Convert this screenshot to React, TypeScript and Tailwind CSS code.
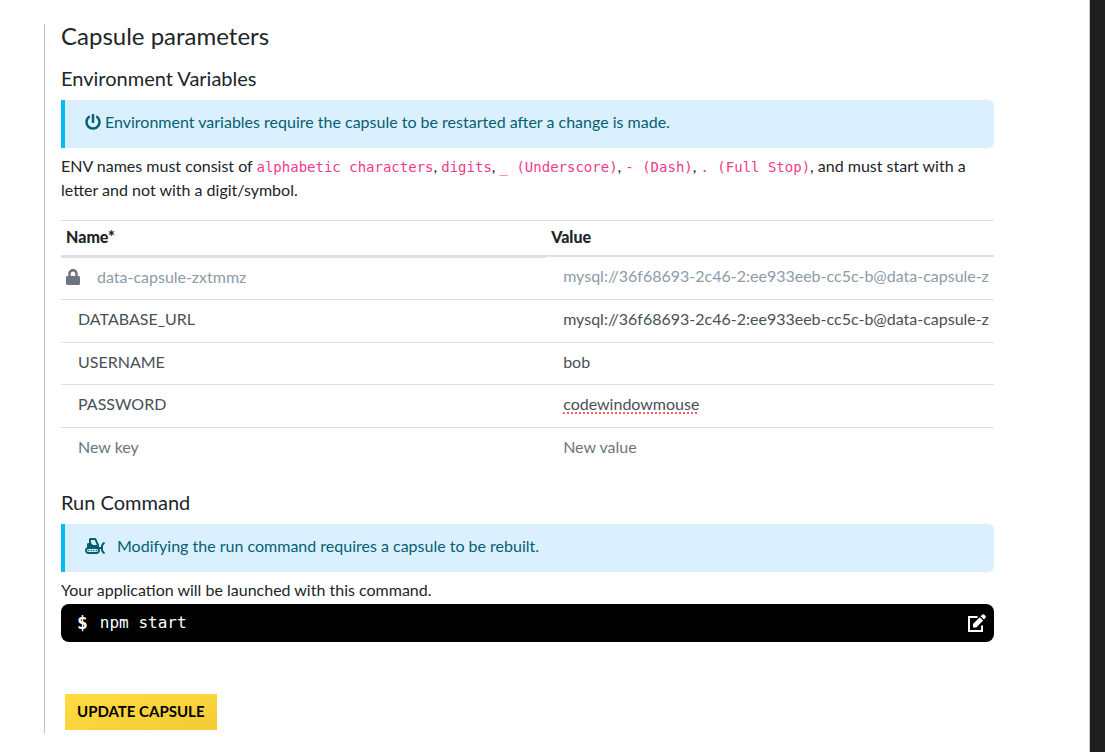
import { useState } from 'react';
import type { ReactNode } from 'react';
import { FaLock, FaPowerOff, FaSnowplow } from 'react-icons/fa';

type Variable = { name: string; value: string; locked?: boolean; misspelt?: boolean };

const variables: Variable[] = [
  {
    name: 'data-capsule-zxtmmz',
    value: 'mysql://36f68693-2c46-2:ee933eeb-cc5c-b@data-capsule-z',
    locked: true,
  },
  { name: 'DATABASE_URL', value: 'mysql://36f68693-2c46-2:ee933eeb-cc5c-b@data-capsule-z' },
  { name: 'USERNAME', value: 'bob' },
  { name: 'PASSWORD', value: 'codewindowmouse', misspelt: true },
  { name: '', value: '' },
];

function EditIcon() {
  return (
    <svg viewBox="0 0 18 18" className="size-[18px]" aria-hidden="true">
      <path d="M9.5 3H1v14h13v-5.5" fill="none" stroke="currentColor" strokeWidth="2" />
      <path d="M5 13.5V10l6.8-6.8 3.3 3.3-6.8 7z" fill="currentColor" />
      <path d="M12.7 2.3l1.7-1.7a1.2 1.2 0 0 1 1.7 0l1.4 1.4a1.2 1.2 0 0 1 0 1.7l-1.6 1.7z" fill="currentColor" />
    </svg>
  );
}

function Notice({ children }: { children: ReactNode }) {
  return (
    <div className="flex h-12 items-center rounded-r-md border-l-4 border-[#00b8f5] bg-[#daf0fe] px-5 pb-1 text-[#055f70]">
      {children}
    </div>
  );
}

function Code({ children }: { children: ReactNode }) {
  return <code className="font-['DejaVu_Sans_Mono',monospace] text-sm text-[#f03a8c]">{children}</code>;
}

function VariableRow({ variable }: { variable: Variable }) {
  const { locked, misspelt } = variable;
  const [name, setName] = useState(variable.name);
  const [value, setValue] = useState(variable.value);
  const tone = locked ? 'text-[#8c9ba8]' : 'text-[#495057]';
  const line = locked ? '' : 'border-t border-[#dee2e6]';
  return (
    <tr className="odd:h-[42px] even:h-[43px]">
      <td className={`p-0 pb-1 ${locked ? 'border-t border-[#dee2e6]' : line}`}>
        <div className={`flex items-center ${locked ? 'gap-4 pl-1' : 'pl-[17px]'}`}>
          {locked && <FaLock className="size-4 shrink-0 text-[#6c757d]" />}
          <input
            aria-label="Name"
            className={`w-full min-w-0 bg-transparent leading-6 outline-none placeholder:text-[#6c757d] ${tone}`}
            placeholder="New key"
            readOnly={locked}
            value={name}
            onChange={(e) => setName(e.target.value)}
          />
        </div>
      </td>
      <td className={`p-0 pb-1 pl-[17px] ${line}`}>
        <input
          aria-label="Value"
          className={`block w-full min-w-0 bg-transparent leading-6 outline-none placeholder:text-[#6c757d] ${tone} ${
            misspelt ? 'underline decoration-[#ff5a6e] decoration-dotted decoration-2 underline-offset-2' : ''
          }`}
          placeholder="New value"
          readOnly={locked}
          spellCheck={false}
          value={value}
          onChange={(e) => setValue(e.target.value)}
        />
      </td>
    </tr>
  );
}

export default function App() {
  const [command, setCommand] = useState('npm start');
  return (
    <div className="flex min-h-screen bg-white font-[Lato,sans-serif] text-base text-[#212529]">
      <main className="min-w-0 flex-1 pb-4 pl-11 pr-[95px] pt-6">
        <section className="border-l border-[#c4c4c4] pb-1 pl-4">
          <h1 className="text-2xl leading-6">Capsule parameters</h1>

          <h2 className="mb-2.5 mt-[18px] text-xl leading-6">Environment Variables</h2>
          <Notice>
            <FaPowerOff className="mr-1 size-4 shrink-0" />
            Environment variables require the capsule to be restarted after a change is made.
          </Notice>
          <p className="mb-[18px] mt-1.5 leading-6">
            ENV names must consist of <Code>alphabetic characters</Code>, <Code>digits</Code>,{' '}
            <Code>_ (Underscore)</Code>, <Code>- (Dash)</Code>, <Code>. (Full Stop)</Code>, and must start with a
            letter and not with a digit/symbol.
          </p>

          <table className="w-full table-fixed border-separate border-spacing-0">
            <thead>
              <tr className="h-[37px] text-left">
                <th className="w-[52%] border-b-2 border-t border-[#dee2e6] p-0 pb-0.5 pl-[5px] font-black">Name*</th>
                <th className="border-b-2 border-t border-[#dee2e6] p-0 pb-0.5 pl-[5px] font-black">Value</th>
              </tr>
            </thead>
            <tbody>
              {variables.map((variable) => (
                <VariableRow key={variable.name} variable={variable} />
              ))}
            </tbody>
          </table>

          <h2 className="mb-2.5 mt-[21px] text-xl leading-6">Run Command</h2>
          <Notice>
            <FaSnowplow className="mr-3 h-4 w-5 shrink-0" />
            Modifying the run command requires a capsule to be rebuilt.
          </Notice>
          <label htmlFor="command" className="mb-0.5 mt-1.5 block leading-6">
            Your application will be launched with this command.
          </label>
          <div className="flex h-[38px] items-center rounded-lg bg-black pl-4 pr-2 font-['DejaVu_Sans_Mono',monospace] text-white">
            <span className="text-lg font-bold">$</span>
            <input
              id="command"
              className="ml-3 min-w-0 flex-1 bg-transparent outline-none"
              value={command}
              onChange={(e) => setCommand(e.target.value)}
            />
            <button type="button" aria-label="Edit command">
              <EditIcon />
            </button>
          </div>

          <button
            type="button"
            className="ml-1 mt-[52px] block h-9 bg-linear-to-br from-[#ffdd40] to-[#f3cb35] px-3 pb-0.5 text-[15px] font-bold text-black"
          >
            UPDATE CAPSULE
          </button>
        </section>
      </main>
      <aside className="w-4 shrink-0 border-l border-[#c4c4c4] bg-[#1e1e1e]" />
    </div>
  );
}
